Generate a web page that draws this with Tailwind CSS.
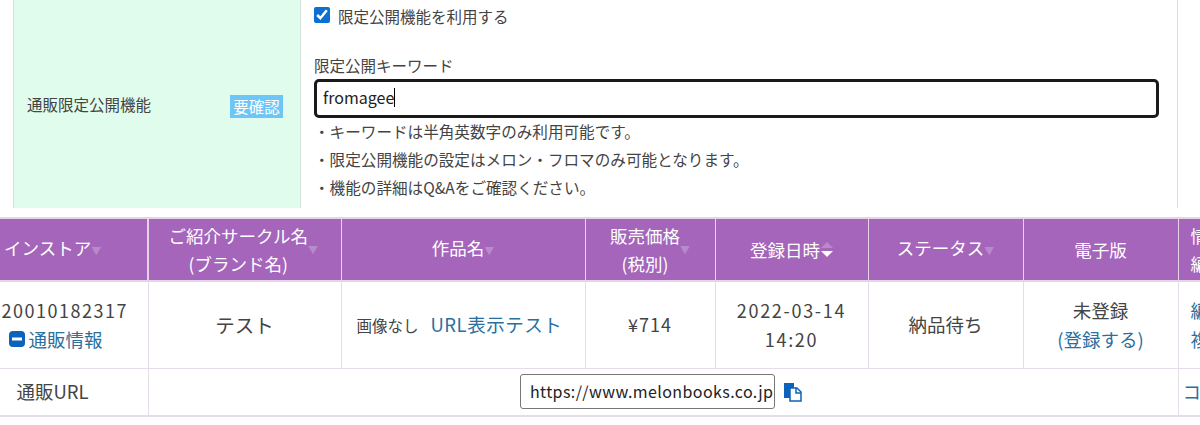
<!DOCTYPE html>
<html lang="ja">
<head>
    <meta charset="UTF-8">
    <title>通販限定公開機能</title>
    <script src="https://cdn.jsdelivr.net/npm/@tailwindcss/browser@4"></script>
</head>
<body class="bg-white h-[425px] w-[1200px] overflow-hidden text-[#444] font-['Noto_Sans_CJK_JP','Noto_Sans',sans-serif]">
    <!-- 設定フォーム -->
    <section class="ml-[13px] w-[1165px] h-[208px] flex border-r border-[#d5e3dc]">
        <div class="w-[288px] shrink-0 bg-[#e0fcec] border-x border-[#cfe3d9] pl-[13px] pr-[17px] pt-[93px] flex justify-between items-start">
            <span class="text-[15.5px] leading-[23px]">通販限定公開機能</span>
            <span class="mt-[2px] w-[53px] h-[23px] bg-[#6ec6f7] text-white text-[15.5px] leading-[23px] text-center">要確認</span>
        </div>
        <div class="flex-1 pl-[13px] pt-[6px]">
            <label class="flex items-center gap-[8px] text-[15.5px] leading-[21px]">
                <input type="checkbox" checked class="w-[16px] h-[16px] accent-[#0d6fd1] -mt-[3px]">
                <span>限定公開機能を利用する</span>
            </label>
            <div class="mt-[28px] text-[15.5px] leading-[21px]">限定公開キーワード</div>
            <div class="mt-[3px] w-[845px] h-[39px] border-[3px] border-[#1a1a1a] rounded-[5px] pl-[6px] pb-[3px] flex items-center text-[16px] text-[#222]">
                <span>fromagee</span><span class="w-px h-[19px] bg-black"></span>
            </div>
            <ul class="-mt-[1px] text-[15.6px] leading-[28px]">
                <li>・キーワードは半角英数字のみ利用可能です。</li>
                <li>・限定公開機能の設定はメロン・フロマのみ可能となります。</li>
                <li>・機能の詳細はQ&amp;Aをご確認ください。</li>
            </ul>
        </div>
    </section>

    <!-- 一覧テーブル -->
    <table class="mt-[9px] -ml-[41px] w-[1280px] table-fixed border-collapse text-[18.5px] text-center">
        <colgroup>
            <col class="w-[188px]">
            <col class="w-[193px]">
            <col class="w-[244px]">
            <col class="w-[130px]">
            <col class="w-[153px]">
            <col class="w-[155px]">
            <col class="w-[155px]">
            <col class="w-[62px]">
        </colgroup>
        <thead class="text-[17.5px]">
            <tr class="h-[63px] bg-[#a465ba] text-white leading-[28px]">
                <th class="font-normal border-2 border-[#e6d3ea] text-left pl-[43px]">インストア<span class="text-[#b98acb] text-[10px]">▼</span></th>
                <th class="font-normal border-x border-y-2 border-[#e6d3ea]"><div class="flex justify-center items-center -ml-[3px]"><span>ご紹介サークル名<br>(ブランド名)</span><span class="text-[#b98acb] text-[10px]">▼</span></div></th>
                <th class="font-normal border-x border-y-2 border-[#e6d3ea]">作品名<span class="text-[#b98acb] text-[10px]">▼</span></th>
                <th class="font-normal border-x border-y-2 border-[#e6d3ea]"><div class="flex justify-center items-center"><span>販売価格<br>(税別)</span><span class="text-[#b98acb] text-[10px]">▼</span></div></th>
                <th class="font-normal border-x border-y-2 border-[#e6d3ea]">
                    <div class="flex justify-center items-center gap-[1px]">
                        <span>登録日時</span>
                        <span class="flex flex-col gap-[3px]">
                            <svg width="12" height="6" viewBox="0 0 12 6"><path d="M6 0l6 6H0z" fill="#b98acb"/></svg>
                            <svg width="12" height="6" viewBox="0 0 12 6"><path d="M0 0h12L6 6z" fill="#fff"/></svg>
                        </span>
                    </div>
                </th>
                <th class="font-normal border-x border-y-2 border-[#e6d3ea]">ステータス<span class="text-[#b98acb] text-[10px]">▼</span></th>
                <th class="font-normal border-x border-y-2 border-[#e6d3ea]">電子版</th>
                <th class="font-normal border-x border-y-2 border-[#e6d3ea] text-left pl-[12px]">情報<br>編集</th>
            </tr>
        </thead>
        <tbody>
            <tr class="h-[87px] leading-[29px]">
                <td class="border border-[#e6dbe9] text-left pl-[41px]">
                    <div class="text-[18px] tracking-[1.5px]">20010182317</div>
                    <div class="flex items-center gap-[4px] pl-[7px] text-[#2a6f9e]">
                        <svg width="16" height="16" viewBox="0 0 16 16"><rect width="16" height="16" rx="4" fill="#0d62ba"/><rect x="3" y="6.5" width="10" height="3" fill="#fff"/></svg>
                        <span>通販情報</span>
                    </div>
                </td>
                <td class="border border-[#e6dbe9] text-[19.5px]">テスト</td>
                <td class="border border-[#e6dbe9] text-left pl-[15px]"><span class="text-[15.5px] mr-[12px]">画像なし</span><span class="text-[#2a6f9e] tracking-[0.5px]">URL表示テスト</span></td>
                <td class="border border-[#e6dbe9] text-[18px] tracking-[1px]">¥714</td>
                <td class="border border-[#e6dbe9] text-[18px] tracking-[1.7px]">2022-03-14<br>14:20</td>
                <td class="border border-[#e6dbe9]">納品待ち</td>
                <td class="border border-[#e6dbe9]">未登録<br><span class="text-[#2a6f9e]">(登録する)</span></td>
                <td class="border border-[#e6dbe9] text-left pl-[12px] text-[#2a6f9e]">編集<br>複製</td>
            </tr>
            <tr class="h-[48px]">
                <td class="border border-[#e6dbe9] border-b-2 text-left pl-[56px]">通販URL</td>
                <td colspan="6" class="border border-[#e6dbe9] border-b-2">
                    <div class="flex justify-center items-center gap-[8px] -ml-[3px]">
                        <div class="w-[255px] h-[35px] border border-[#777] rounded-[3px] pl-[9px] text-left text-[16px] leading-[33px] text-[#222] overflow-hidden whitespace-nowrap tracking-[0.4px]">https://www.melonbooks.co.jp</div>
                        <svg width="20" height="20" viewBox="0 0 20 20">
                            <path d="M1 1h10v15H1z" fill="#0d62ba"/>
                            <path d="M7 6h7l4 4v9H7z" fill="#fff" stroke="#0d62ba" stroke-width="1.5"/>
                            <path d="M13 6v5h5" fill="none" stroke="#0d62ba" stroke-width="1.5"/>
                        </svg>
                    </div>
                </td>
                <td class="border border-[#e6dbe9] border-b-2 text-left pl-[4px] text-[#2a6f9e]">コピー</td>
            </tr>
        </tbody>
    </table>
</body>
</html>
